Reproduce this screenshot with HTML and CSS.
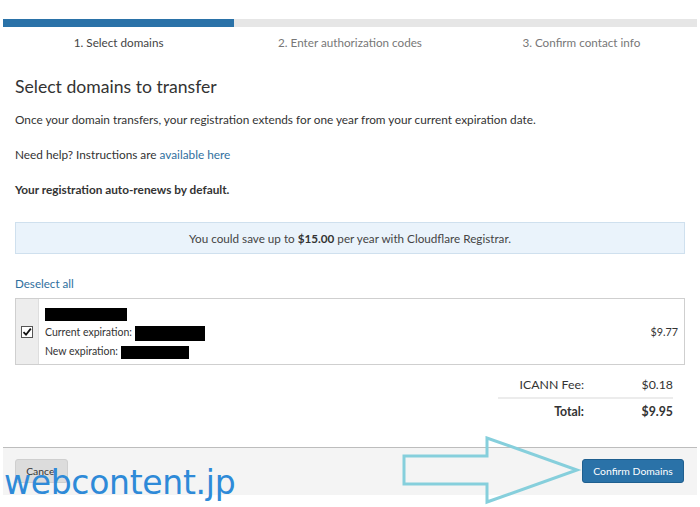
FILE: index.html
```html
<!DOCTYPE html>
<html lang="en">
<head>
<meta charset="utf-8">
<link rel="stylesheet" href="styles.css">
</head>
<body>
<div class="page">
  <div class="steps">
    <div class="progress"><div class="progress-fill"></div></div>
    <div class="step-labels">
      <div class="step active">1. Select domains</div>
      <div class="step">2. Enter authorization codes</div>
      <div class="step">3. Confirm contact info</div>
    </div>
  </div>

  <div class="content">
    <h1 class="title">Select domains to transfer</h1>
    <p class="text">Once your domain transfers, your registration extends for one year from your current expiration date.</p>
    <p class="text">Need help? Instructions are <a class="link" href="#">available here</a></p>
    <p class="text bold">Your registration auto-renews by default.</p>

    <div class="notice">You could save up to <strong>$15.00</strong> per year with Cloudflare Registrar.</div>

    <a class="link deselect" href="#">Deselect all</a>

    <div class="domain">
      <div class="domain-check">
        <svg class="check" width="12" height="12" viewBox="0 0 12 12">
          <rect x="0.5" y="0.5" width="11" height="11" fill="#fff" stroke="#555"/>
          <path d="M2.5 6.2 L5 8.7 L9.8 2.6" fill="none" stroke="#111" stroke-width="1.8"/>
        </svg>
      </div>
      <div class="domain-info">
        <div class="redact r-name"></div>
        <div class="line">Current expiration: <span class="redact r-cur"></span></div>
        <div class="line">New expiration: <span class="redact r-new"></span></div>
      </div>
      <div class="domain-price">$9.77</div>
    </div>

    <div class="totals">
      <div class="tot-row">
        <span class="tot-label">ICANN Fee:</span>
        <span class="tot-value">$0.18</span>
      </div>
      <div class="tot-row total">
        <span class="tot-label">Total:</span>
        <span class="tot-value">$9.95</span>
      </div>
    </div>
  </div>

  <div class="footer">
    <button class="btn btn-cancel">Cancel</button>
    <button class="btn btn-primary">Confirm Domains</button>
  </div>

  <svg class="arrow" width="180" height="70" viewBox="0 0 180 70">
    <path d="M2 20 L85 20 L85 2 L175 34 L85 66 L85 48 L2 48 Z" fill="none" stroke="#86cfdc" stroke-width="3"/>
  </svg>
  <div class="watermark">webcontent.jp</div>
</div>
</body>
</html>
```

FILE: styles.css
```css
* { box-sizing: border-box; }
html, body { margin: 0; padding: 0; background: #fff; }
body {
  font-family: Lato, "Open Sans", sans-serif;
  color: #333;
  font-size: 11.8px;
}
.page {
  position: relative;
  width: 700px;
  height: 507px;
  overflow: hidden;
}
.steps { padding: 19px 3px 0 3px; }
.progress {
  height: 8px;
  background: #e6e6e6;
}
.progress-fill {
  width: 33.333%;
  height: 100%;
  background: #2a72a8;
}
.step-labels {
  display: grid;
  grid-template-columns: 1fr 1fr 1fr;
  margin-top: 7px;
}
.step {
  text-align: center;
  font-size: 11.7px;
  color: #777;
  line-height: 16px;
}
.step.active { color: #444; }

.content { padding: 0 15px; }
.title {
  font-size: 17.6px;
  font-weight: 400;
  margin: 25px 0 0 0;
  line-height: 24px;
  color: #333;
}
.text {
  margin: 12px 0 0 0;
  line-height: 18px;
  font-size: 11.8px;
}
.text + .text { margin-top: 17px; }
.bold { font-weight: 700; color: #333; }
.link { color: #2f6f9e; text-decoration: none; }

.notice {
  margin-top: 23px;
  height: 32px;
  background: #eaf3fb;
  border: 1px solid #cfe0ee;
  text-align: center;
  line-height: 30px;
  font-size: 11.7px;
  color: #444;
}
.notice strong { font-weight: 700; color: #333; }

.deselect {
  display: block;
  margin-top: 21px;
  line-height: 18px;
  font-size: 11.6px;
}

.domain {
  margin-top: 5px;
  display: flex;
  border: 1px solid #cfcfcf;
  height: 67px;
}
.domain-check {
  width: 23px;
  background: #ededed;
  border-right: 1px solid #dedede;
  display: flex;
  align-items: center;
  justify-content: center;
}
.domain-info {
  flex: 1;
  padding: 9px 0 0 6px;
  font-size: 10.5px;
  color: #333;
}
.redact { display: inline-block; background: #000; vertical-align: middle; }
.r-name { width: 82px; height: 13px; margin-bottom: 2px; display: block; }
.r-cur { width: 70px; height: 15px; }
.r-new { width: 68px; height: 13px; }
.line { line-height: 19px; }
.domain-price {
  align-self: center;
  padding-right: 6px;
  font-size: 10.8px;
}

.totals {
  width: 175px;
  margin: 7px 12px 0 auto;
}
.tot-row {
  display: flex;
  justify-content: flex-end;
  line-height: 25px;
  font-size: 12.3px;
}
.tot-row + .tot-row { border-top: 2px solid #ececec; }
.tot-label { text-align: right; }
.tot-value { width: 89px; text-align: right; }
.total { font-weight: 700; }

.footer {
  position: absolute;
  left: 3px;
  right: 3px;
  top: 447px;
  height: 48px;
  background: #f4f4f4;
  border-top: 1px solid #bdbdbd;
  display: flex;
  justify-content: space-between;
  align-items: center;
  padding: 0 13px 1px 12px;
}
.btn {
  font-family: inherit;
  font-size: 10.4px;
  height: 24px;
  border-radius: 3px;
  border: 1px solid transparent;
  padding: 0;
  white-space: nowrap;
}
.btn-cancel {
  background: #dcdcdc;
  border-color: #cfcfcf;
  color: #333;
  width: 53px;
}
.btn-primary {
  background: #2a72a8;
  border-color: #1f5f8f;
  color: #fff;
  width: 102px;
}
.arrow {
  position: absolute;
  left: 402px;
  top: 436px;
}
.watermark {
  position: absolute;
  left: 4px;
  top: 462px;
  font-family: "DejaVu Sans", sans-serif;
  font-size: 33px;
  color: #2e8ad8;
  letter-spacing: -0.3px;
  line-height: 42px;
}
```
